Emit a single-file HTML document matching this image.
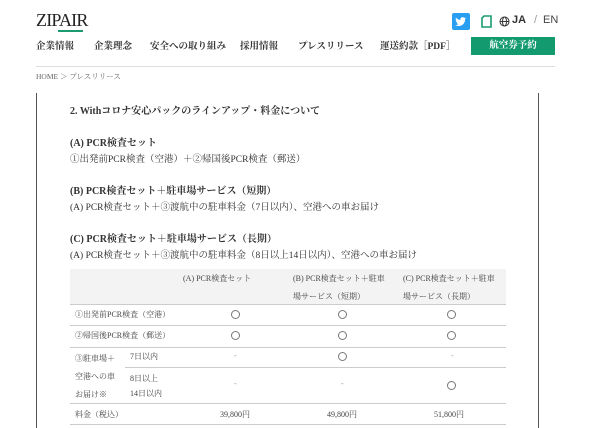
<!DOCTYPE html>
<html><head><meta charset="utf-8"><style>
*{margin:0;padding:0;box-sizing:border-box}
body{width:600px;height:428px;overflow:hidden;background:#fff;font-family:"Liberation Serif","Noto Serif CJK SC",serif;color:#333;position:relative}
.a{position:absolute;white-space:nowrap}
.nav{font-size:9.5px;font-weight:bold;top:38px;color:#333}
.t{font-size:9.5px;color:#333}
.h{font-size:10px;font-weight:bold;color:#333}
.s{font-size:8px;color:#444}
.c{width:9px;height:9px;border:1px solid #777;border-radius:50%}
.hl{position:absolute;left:70px;width:436px;height:1px;background:#ccc}
</style></head><body>
<div class="a" style="left:36px;top:10px;font-size:18px;letter-spacing:-0.8px;color:#222">ZIPAIR</div>
<div class="a" style="left:58px;top:30px;width:25px;height:1.5px;background:#1a9a6f"></div>
<div class="a" style="left:452px;top:13px;width:18px;height:17px;background:#2a9ef0;border-radius:2px">
<svg width="18" height="17" viewBox="0 0 18 17"><path d="M14 5.2c-.4.2-.9.3-1.3.4.5-.3.8-.7 1-1.2-.4.3-.9.4-1.4.5a2.2 2.2 0 0 0-3.8 2A6.3 6.3 0 0 1 4 4.6a2.2 2.2 0 0 0 .7 3c-.4 0-.7-.1-1-.3 0 1.1.8 2 1.8 2.2-.3.1-.7.1-1 0 .3.9 1.1 1.5 2.1 1.5A4.5 4.5 0 0 1 3.3 12c1 .6 2.1 1 3.4 1 4.1 0 6.3-3.4 6.3-6.3v-.3c.4-.3.8-.7 1-1.2z" fill="#fff"/></svg></div>
<svg class="a" style="left:481px;top:15px" width="11" height="13" viewBox="0 0 11 13"><path d="M3 1h7v11H1V3z" fill="none" stroke="#1a9a6f" stroke-width="1.6"/></svg>
<svg class="a" style="left:499px;top:16px" width="11" height="11" viewBox="0 0 11 11" fill="none" stroke="#333" stroke-width="1"><circle cx="5.5" cy="5.5" r="4.5"/><ellipse cx="5.5" cy="5.5" rx="2" ry="4.5"/><path d="M1 5.5h9"/></svg>
<div class="a" style="left:512px;top:14px;font-size:11px;font-family:'Liberation Sans',sans-serif;font-weight:bold;color:#333">JA</div>
<div class="a" style="left:534px;top:14px;font-size:11px;font-family:'Liberation Sans',sans-serif;color:#999">/</div>
<div class="a" style="left:543px;top:14px;font-size:11px;font-family:'Liberation Sans',sans-serif;color:#444">EN</div>
<div class="a nav" style="left:36px">企業情報</div>
<div class="a nav" style="left:94px">企業理念</div>
<div class="a nav" style="left:150px">安全への取り組み</div>
<div class="a nav" style="left:240px">採用情報</div>
<div class="a nav" style="left:298px">プレスリリース</div>
<div class="a nav" style="left:380px">運送約款［PDF］</div>
<div class="a" style="left:471px;top:37px;width:84px;height:18px;background:#139a6f;color:#fff;font-size:9.5px;font-weight:bold;text-align:center;line-height:18px">航空券予約</div>
<div class="a" style="left:36px;top:66px;width:519px;height:1px;background:#ddd"></div>
<div class="a" style="left:36px;top:71px;font-size:7.5px;color:#666">HOME ＞ プレスリリース</div>
<div class="a" style="left:36px;top:93px;width:1px;height:335px;background:#555"></div>
<div class="a" style="left:538px;top:93px;width:1px;height:335px;background:#555"></div>
<div class="a h" style="left:70px;top:102px">2. Withコロナ安心パックのラインアップ・料金について</div>
<div class="a h" style="left:70px;top:134px">(A) PCR検査セット</div>
<div class="a t" style="left:70px;top:151px">①出発前PCR検査（空港）＋②帰国後PCR検査（郵送）</div>
<div class="a h" style="left:70px;top:182px">(B) PCR検査セット＋駐車場サービス（短期）</div>
<div class="a t" style="left:70px;top:199px">(A) PCR検査セット＋③渡航中の駐車料金（7日以内）、空港への車お届け</div>
<div class="a h" style="left:70px;top:230px">(C) PCR検査セット＋駐車場サービス（長期）</div>
<div class="a t" style="left:70px;top:247px">(A) PCR検査セット＋③渡航中の駐車料金（8日以上14日以内）、空港への車お届け</div>
<div class="a" style="left:70px;top:269px;width:436px;height:35px;background:#f3f3f3"></div>
<div class="a s" style="left:183px;top:273px">(A) PCR検査セット</div>
<div class="a s" style="left:293px;top:270px;line-height:18px">(B) PCR検査セット＋駐車<br>場サービス（短期）</div>
<div class="a s" style="left:403px;top:270px;line-height:18px">(C) PCR検査セット＋駐車<br>場サービス（長期）</div>
<div class="hl" style="top:304px"></div><div class="hl" style="top:325px"></div><div class="hl" style="top:347px"></div>
<div class="hl" style="top:367px;left:125px;width:381px"></div><div class="hl" style="top:403px"></div><div class="hl" style="top:424px"></div>
<div class="a s" style="left:75px;top:309px">①出発前PCR検査（空港）</div>
<div class="a s" style="left:75px;top:330px">②帰国後PCR検査（郵送）</div>
<div class="a s" style="left:75px;top:350px;line-height:18px">③駐車場＋<br>空港への車<br>お届け※</div>
<div class="a s" style="left:130px;top:351px">7日以内</div>
<div class="a s" style="left:130px;top:371px;line-height:15px">8日以上<br>14日以内</div>
<div class="a s" style="left:75px;top:409px">料金（税込）</div>
<div class="a c" style="left:231px;top:310px"></div><div class="a c" style="left:338px;top:310px"></div><div class="a c" style="left:447px;top:310px"></div>
<div class="a c" style="left:231px;top:331px"></div><div class="a c" style="left:338px;top:331px"></div><div class="a c" style="left:447px;top:331px"></div>
<div class="a s" style="left:234px;top:351px;color:#999">-</div><div class="a c" style="left:338px;top:352px"></div><div class="a s" style="left:451px;top:351px;color:#999">-</div>
<div class="a s" style="left:234px;top:379px;color:#999">-</div><div class="a s" style="left:341px;top:379px;color:#999">-</div><div class="a c" style="left:447px;top:381px"></div>
<div class="a s" style="left:220px;top:409px">39,800円</div>
<div class="a s" style="left:327px;top:409px">49,800円</div>
<div class="a s" style="left:434px;top:409px">51,800円</div>
</body></html>
